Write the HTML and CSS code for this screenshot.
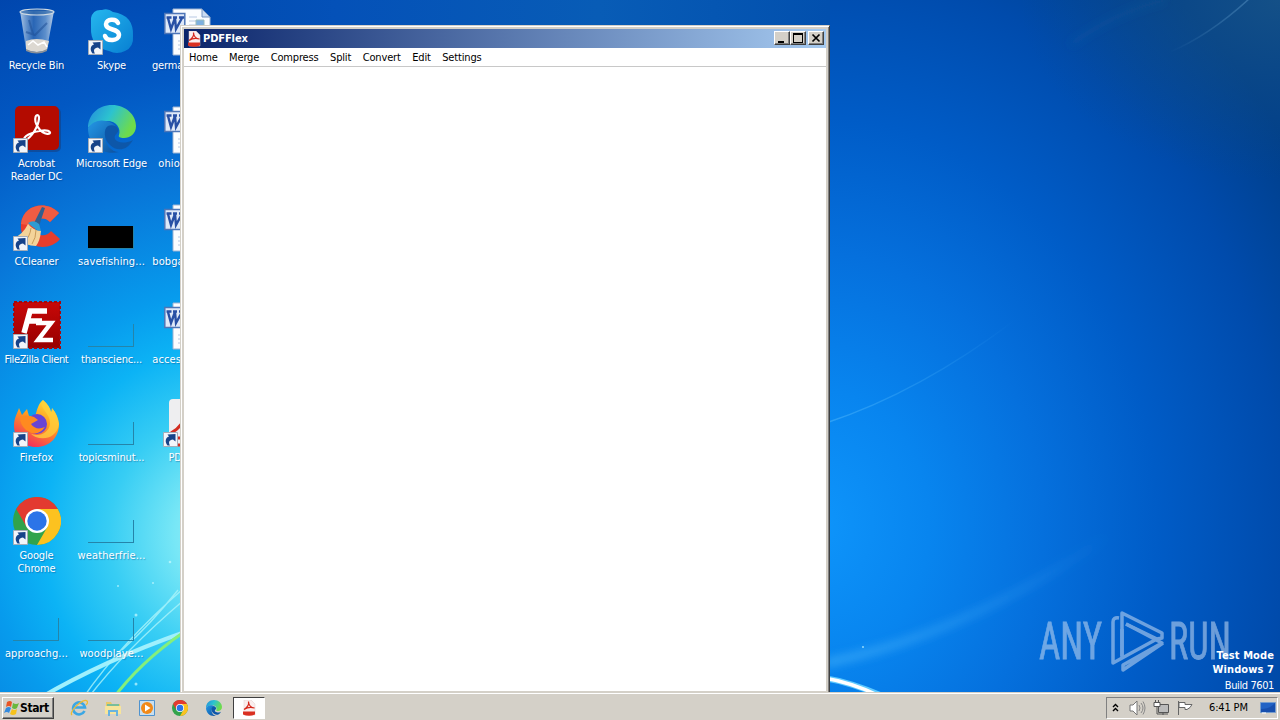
FILE: index.html
```html
<!DOCTYPE html>
<html lang="en">
<head>
    <meta charset="UTF-8">
    <meta name="viewport" content="width=device-width, initial-scale=1.0">
    <title>PDFFlex</title>
    <link rel="stylesheet" href="styles.css">
</head>
<body>
    <!-- shared icon shapes -->
    <svg class="defs" width="0" height="0">
        <defs>
            <linearGradient id="skypeBlue" x1="0" y1="0" x2="1" y2="1"><stop offset="0" stop-color="#25b7ee"/><stop offset="1" stop-color="#087fd2"/></linearGradient>
            <linearGradient id="edgeTop" x1="0" y1="0" x2="1" y2=".4"><stop offset="0" stop-color="#2389dc"/><stop offset=".5" stop-color="#2cc3cf"/><stop offset="1" stop-color="#6edb4c"/></linearGradient>
            <linearGradient id="edgeLow" x1="0" y1="0" x2="1" y2="1"><stop offset="0" stop-color="#2498e5"/><stop offset="1" stop-color="#0b4f9f"/></linearGradient>
            <linearGradient id="fox" x1=".8" y1="0" x2=".3" y2="1"><stop offset="0" stop-color="#ffe43b"/><stop offset=".45" stop-color="#ff9a22"/><stop offset="1" stop-color="#f2285d"/></linearGradient>
            <linearGradient id="glass" x1="0" y1="0" x2="1" y2="0"><stop offset="0" stop-color="#c9dcef" stop-opacity=".85"/><stop offset=".4" stop-color="#3f74b6" stop-opacity=".65"/><stop offset=".75" stop-color="#84abd5" stop-opacity=".7"/><stop offset="1" stop-color="#dbe6f2" stop-opacity=".85"/></linearGradient>
            <linearGradient id="zilla" x1="0" y1="0" x2="0" y2="1"><stop offset="0" stop-color="#c80808"/><stop offset="1" stop-color="#960000"/></linearGradient>
        </defs>
        <symbol id="arrow" viewBox="0 0 15 15">
            <path d="M.5.5h14v14H.5z" fill="#f2f5fa" stroke="#a5adb8"/>
            <path d="M4.500 13.500c-3-4-2-8 1.500-9L4.500 2.500 12.500 2v7.500L10 7.500c-4 .5-5 3-3 6z" fill="#174389"/>
        </symbol>
        <symbol id="acro" viewBox="0 0 32 32">
            <path d="M3 28c-4-3 8-9 18-10 9-.8 10 4 5 3.500C19 21 12 10 14 4c1-3 4-2 3.500 2C17 13 10 26 3 28z" fill="none" stroke="currentColor" stroke-width="2.200" stroke-linejoin="round"/>
        </symbol>
        <symbol id="edge" viewBox="0 0 48 48">
            <path d="M0 23C0 10 10 0 24 0s24 10 24 21c0 8-6 12-12 12-4 0-6-1-5-3 2-6-2-14-12-14C10 16 3 20 0 23z" fill="url(#edgeTop)"/>
            <path d="M0 23c4-6 11-9 18-7 7 1 11 6 12 11-5-7-13-3-13 5 0 7 6 15 14 15C14 51 0 40 0 23z" fill="url(#edgeLow)"/>
            <path d="M20 21c-5 3-4 14 2 19 6 6 16 7 23-5-8 4-16 3-18-1-2-5 5-6 3-10-1-3-6-5-10-3z" fill="#0d57a9"/>
        </symbol>
        <symbol id="chrome" viewBox="0 0 48 48">
            <circle cx="24" cy="24" r="24" fill="#31a34c"/>
            <path d="M24 12h20.800A24 24 0 0 1 24 48l10.400-18z" fill="#fcc220"/>
            <path d="M3.200 12A24 24 0 0 1 44.800 12H24L13.600 30z" fill="#e33a30"/>
            <circle cx="24" cy="24" r="12" fill="#fff"/><circle cx="24" cy="24" r="9.700" fill="#2b74e8"/>
        </symbol>
        <symbol id="word" viewBox="0 0 48 48">
            <path d="M9 1h29l8 8v38H9z" fill="#fbfdff" stroke="#9db4d3"/>
            <path d="M38 1v8h8z" fill="#cbdcf2" stroke="#7896c0"/>
            <path d="M14 33h26M14 37h26M14 41h26M25 9h8M25 13h8M25 17h8" stroke="#b7c8e2"/>
            <path d="M32 12h8v6h-8z" fill="#7eb0df" stroke="#9bb"/>
            <path d="M.8 5.500h20v20h-20z" fill="#dfe9f8" stroke="#4e76b7" stroke-width="1.500"/>
            <path d="M4 10l3 11 4-11 1 11 6-11M2.500 9.500h5M9 9.500h4M15 9.500h5" fill="none" stroke="#2850a5" stroke-width="2.400"/>
        </symbol>
        <symbol id="pdfIcon" viewBox="0 0 14 16">
            <path d="M2 0h7l4 4v11H2z" fill="#faeeee" stroke="#e0cccc" stroke-width=".5"/>
            <path d="M2 9.500C6 7 7 4 6.500 1.500 6.500 5 9 8 12.500 8 9 7 5 7.500 2 9.500z" stroke="#d5281c" stroke-width="1.200" fill="none"/>
            <path d="M1 11.500h12v3q-6 2.500-12 0z" fill="#da3021"/>
        </symbol>
    </svg>

    <svg class="wallpaper" viewBox="0 0 1280 720">
        <defs>
            <radialGradient id="leftGlow" gradientUnits="userSpaceOnUse" cx="235" cy="535" r="600">
                <stop offset="0" stop-color="#a8f3f6"/><stop offset=".1" stop-color="#78e7f6"/><stop offset=".21" stop-color="#37cdf4"/>
                <stop offset=".32" stop-color="#0cb3f5"/><stop offset=".41" stop-color="#079bed"/><stop offset=".6" stop-color="#0875d8"/>
                <stop offset=".77" stop-color="#0258c3"/><stop offset="1" stop-color="#0044ab"/>
            </radialGradient>
            <radialGradient id="rightGlow" gradientUnits="userSpaceOnUse" cx="0" cy="0" r="1" gradientTransform="translate(815 525) scale(570 680)">
                <stop offset="0" stop-color="#0e95fb"/><stop offset=".2" stop-color="#0885ef"/><stop offset=".4" stop-color="#0570dd"/>
                <stop offset=".6" stop-color="#005cc7"/><stop offset=".82" stop-color="#004bac"/><stop offset="1" stop-color="#003f8b"/>
            </radialGradient>
            <linearGradient id="topBand"><stop offset="0" stop-color="#004aaf"/><stop offset=".25" stop-color="#0451b8"/><stop offset=".65" stop-color="#085cb6"/><stop offset="1" stop-color="#0250ae"/></linearGradient>
            <radialGradient id="corner" cx="1" cy="0" r="1"><stop offset="0" stop-color="#1b5686" stop-opacity=".75"/><stop offset="1" stop-color="#104a82" stop-opacity="0"/></radialGradient>
            <linearGradient id="ray"><stop offset="0" stop-color="#4bb4fa" stop-opacity=".55"/><stop offset="1" stop-color="#4bb4fa" stop-opacity="0"/></linearGradient>
            <linearGradient id="topRay"><stop offset="0" stop-color="#5995c5" stop-opacity="0"/><stop offset="1" stop-color="#5995c5" stop-opacity=".5"/></linearGradient>
            <filter id="soft" x="-10%" y="-20%" width="120%" height="140%"><feGaussianBlur stdDeviation="4"/></filter>
            <filter id="slight"><feGaussianBlur stdDeviation=".7"/></filter>
        </defs>
        <rect width="500" height="720" fill="url(#leftGlow)"/>
        <rect x="500" width="780" height="720" fill="url(#rightGlow)"/>
        <rect x="170" width="660" height="40" fill="url(#topBand)"/>
        <rect x="1020" width="260" height="180" fill="url(#corner)"/>
        <path d="M826 423Q920 392 1015 320" stroke="url(#ray)" stroke-width="1.500" fill="none"/>
        <path d="M826 663Q965 635 1110 535" stroke="url(#ray)" stroke-width="9" fill="none" filter="url(#soft)"/>
        <path d="M1170 52Q1210 35 1250-2" stroke="url(#topRay)" stroke-width="1.500" fill="none"/>
        <path d="M1070 45Q1115 12 1165 0" stroke="#2d6eae" stroke-opacity=".15" stroke-width="6" fill="none" filter="url(#soft)"/>
        <path d="M824 678Q850 682 885 697" stroke="#5fcaff" stroke-width="6" fill="none" filter="url(#slight)"/>
        <path d="M824 678Q850 682 880 696" stroke="#fff" stroke-width="3.500" fill="none"/>
        <g fill="none" filter="url(#slight)">
            <path d="M40 698Q105 660 185 632" stroke="#9ff0fd" stroke-width="4"/>
            <path d="M83 698Q120 644 184 588M88 698Q125 650 184 600M122 650Q150 625 178 590" stroke="#aaf4fa" stroke-opacity=".8" stroke-width="1.400"/>
            <path d="M112 700Q140 662 184 632" stroke="#84ef7b" stroke-width="3"/>
        </g>
        <g fill="#c9faff" fill-opacity=".7"><circle cx="118" cy="586" r="1"/><circle cx="153" cy="583" r="1"/><circle cx="136" cy="615" r="1.500"/><circle cx="136" cy="684" r="1.500"/><circle cx="170" cy="562" r="1.300"/><circle cx="863" cy="647" r="1"/></g>
    </svg>

    <main class="desktop">
        <div class="item">
            <svg class="icon" viewBox="0 0 48 48">
                <path d="M7 3l6 38q11 5 21 0l7-38z" fill="url(#glass)"/>
                <path d="M13 33q10-4 23 0l-2 9q-10 4-21 0z" fill="#dcd8d1"/>
                <path d="M15 37l5-4 5 4 6-3 3 5" fill="none" stroke="#fff" stroke-width="1.500"/>
                <path d="M13 24l9 3 12-12M16 12l4 14" stroke="#1b4c91" stroke-opacity=".5" stroke-width="2" fill="none"/>
                <ellipse cx="24" cy="4" rx="17" ry="3" fill="#376da8" fill-opacity=".6" stroke="#cfdae3" stroke-width="1.200"/>
                <path d="M13 41q11 6 21 0v2q-10 5-21 0z" fill="#8a9098"/>
            </svg>
            <span class="label">Recycle Bin</span>
        </div>
        <div class="item">
            <svg class="icon" viewBox="0 0 48 48">
                <path d="M14 2Q5 1 3 10v9q-1 20 18 24 8 4 16 0 9-4 8-15Q46 7 25 4 20 0 14 2z" fill="url(#skypeBlue)"/>
                <path d="M30 15c-2-5-12-4-12 1 0 7 13 4 13 11 0 6-12 7-14 1" fill="none" stroke="#fff" stroke-width="4.500" stroke-linecap="round"/>
                <use href="#arrow" x="0" y="32" width="15" height="15"/>
            </svg>
            <span class="label">Skype</span>
        </div>
        <div class="item"><svg class="icon doc"><use href="#word"/></svg><span class="label">germanyjoin...</span></div>

        <div class="item">
            <svg class="icon" viewBox="0 0 48 48">
                <rect x="3" y="2" width="45" height="44" rx="5" fill="#173a76" opacity=".5"/>
                <rect x="2" y="0" width="44" height="44" rx="5" fill="#b30b00"/>
                <svg class="white" x="9" y="7" width="31" height="31"><use href="#acro"/></svg>
                <use href="#arrow" x="0" y="32" width="15" height="15"/>
            </svg>
            <span class="label">Acrobat<br>Reader DC</span>
        </div>
        <div class="item">
            <svg class="icon" viewBox="0 0 48 48"><use href="#edge" y="-1" width="48" height="48"/><use href="#arrow" x="0" y="32" width="15" height="15"/></svg>
            <span class="label">Microsoft Edge</span>
        </div>
        <div class="item"><svg class="icon doc"><use href="#word"/></svg><span class="label wide">ohioopen...</span></div>

        <div class="item">
            <svg class="icon" viewBox="0 0 48 48">
                <path d="M46 9C34-4 10 0 8 20c-2 23 27 30 39 15l-9-8c-6 8-16 4-16-4 0-9 9-12 15-5z" fill="#e83d2c"/>
                <path d="M46 9C34-4 10 0 8 20l14 2c1-8 9-10 15-4z" fill="#f05c42"/>
                <path d="M29 3l3 1-6 18-5-3z" fill="#315f8f"/>
                <path d="M15 19q6-4 11 1l2 7q-6-1-13-8z" fill="#2e9bd3"/>
                <path d="M15 20q6 7 13 7-1 10-5 15-10 0-22-8 9-4 14-14z" fill="#f4d49a"/>
                <path d="M18 24q-1 9-7 14M23 26q0 8-4 14" stroke="#c99b59" fill="none"/>
                <use href="#arrow" x="0" y="32" width="15" height="15"/>
            </svg>
            <span class="label">CCleaner</span>
        </div>
        <div class="item"><div class="icon"><div class="thumb black"></div></div><span class="label wide">savefishing...</span></div>
        <div class="item"><svg class="icon doc"><use href="#word"/></svg><span class="label wide">bobgallerys...</span></div>

        <div class="item">
            <svg class="icon" viewBox="0 0 48 48">
                <path d="M1 0h46v46H1z" fill="url(#zilla)" stroke="#a80509" stroke-width="2" stroke-dasharray="3 2"/>
                <path d="M11 31l6-22h17M14 19h15" stroke="#fff" stroke-width="5.500" fill="none"/>
                <path d="M23 21h15L25 38h15" stroke="#fff" stroke-width="4.500" fill="none"/>
                <use href="#arrow" x="0" y="32" width="15" height="15"/>
            </svg>
            <span class="label tight">FileZilla Client</span>
        </div>
        <div class="item"><div class="icon"><div class="thumb"></div></div><span class="label">thanscienc...</span></div>
        <div class="item"><svg class="icon doc"><use href="#word"/></svg><span class="label wide">accessories...</span></div>

        <div class="item">
            <svg class="icon" viewBox="0 0 48 48">
                <path d="M30 0q7 6 8 12 2-1 1-4 6 7 7 16c0 13-9 23-23 23C10 47 1 38 1 26 1 18 4 14 6 8l3 7 5-6 2 7 6 1c2-7 3-13 8-17z" fill="url(#fox)"/>
                <path d="M30 0c-6 7 8 13 7 24-1 9-12 14-20 9 8 9 27 7 29-9-1-6-3-11-7-16l-1 4Q36 5 30 0z" fill="#ffd23c" opacity=".75"/>
                <circle cx="24" cy="24" r="10" fill="#6944d5"/>
                <path d="M7 17q7-3 14 0l4 3-7 4q5 7 14 3-8 11-19 3-6-5-6-13z" fill="#ff8a20"/>
                <use href="#arrow" x="0" y="32" width="15" height="15"/>
            </svg>
            <span class="label wide">Firefox</span>
        </div>
        <div class="item"><div class="icon"><div class="thumb"></div></div><span class="label">topicsminut...</span></div>
        <div class="item">
            <svg class="icon" viewBox="0 0 48 48"><rect x="6" y="-1" width="34" height="47" rx="4" fill="#eeeef0"/><path d="M8 33q14-8 14-20 0 14 17 20M8 38h32v7H8z" fill="none" stroke="#d32c20" stroke-width="3"/><use href="#arrow" x="0" y="32" width="15" height="15"/></svg>
            <span class="label">PDFflex</span>
        </div>

        <div class="item">
            <svg class="icon" viewBox="0 0 48 48"><use href="#chrome" y="-1" width="48" height="48"/><use href="#arrow" x="0" y="32" width="15" height="15"/></svg>
            <span class="label">Google<br>Chrome</span>
        </div>
        <div class="item"><div class="icon"><div class="thumb"></div></div><span class="label wide">weatherfrie...</span></div>
        <div class="item"></div>
        <div class="item"><div class="icon"><div class="thumb"></div></div><span class="label wide">approachg...</span></div>
        <div class="item"><div class="icon"><div class="thumb"></div></div><span class="label wide">woodplaye...</span></div>
    </main>

    <svg class="watermark" viewBox="0 0 192 64">
        <text x="0" y="50" textLength="63" lengthAdjust="spacingAndGlyphs">ANY</text>
        <text x="130" y="50" textLength="62" lengthAdjust="spacingAndGlyphs">RUN</text>
        <g fill="none" stroke-width="3.500" stroke-linejoin="round">
            <path d="M80 9q-6-1-6 4v41l42-23"/>
            <path d="M83 49V4l40 20v5l-5 1L87 15"/>
            <path d="M83 20v27M87 15l36 19-39 22v5l40-27"/>
        </g>
    </svg>
    <div class="build"><b>Test Mode</b><b>Windows 7</b><span>Build 7601</span></div>

    <section class="window">
        <header class="titlebar">
            <svg width="14" height="16"><use href="#pdfIcon"/></svg>
            <span class="title">PDFFlex</span>
            <button class="control" aria-label="Minimize"><svg width="14" height="12"><path d="M3 9h6v2H3z"/></svg></button>
            <button class="control" aria-label="Maximize"><svg width="14" height="12"><path d="M2 1h10v10H2zM3 3v7h8V3z" fill-rule="evenodd"/></svg></button>
            <button class="control close" aria-label="Close"><svg width="14" height="12"><path d="M3.500 2.500l7 7m0-7l-7 7" stroke="#000" stroke-width="1.700"/></svg></button>
        </header>
        <nav class="menu">
            <span>Home</span><span>Merge</span><span>Compress</span><span>Split</span><span>Convert</span><span>Edit</span><span>Settings</span>
        </nav>
        <div class="page"></div>
    </section>

    <footer class="taskbar">
        <button class="start">
            <svg width="16" height="16" viewBox="0 0 16 16"><path d="M3 2q3-2 5 0L7 7q-2-2-5 0z" fill="#e95525"/><path d="M9 3q3 2 6 0l-2 5q-2 2-5 0z" fill="#69b83d"/><path d="M2 8q3-2 5 0l-2 5q-2-2-5 0z" fill="#348ade"/><path d="M8 9q2 2 5 0l-1 5q-3 2-6 0z" fill="#f6c21c"/></svg>
            <span>Start</span>
        </button>
        <div class="tasks">
            <svg width="18" height="18" viewBox="0 0 18 18"><path d="M14.500 12A6 6 0 1 1 15 8.500H5" fill="none" stroke="#3ba7e4" stroke-width="2.600"/><path d="M2 16C-2 13 14-2 17 2c1 1 0 3-1 4" fill="none" stroke="#edbb32" stroke-width="1.300"/></svg>
            <svg width="18" height="18" viewBox="0 0 18 18"><path d="M2 3h5l1 2h8v9H2z" fill="#e8ca67"/><path d="M3 5h12v3H3z" fill="#79bd9b"/><path d="M1 7h16v8H1z" fill="#f7e49b"/><path d="M5 17v-5h8v5" fill="none" stroke="#68b3df" stroke-width="2"/></svg>
            <svg width="18" height="18" viewBox="0 0 18 18"><path d="M1.500 1.500h15v15h-15z" fill="#c9dfef" stroke="#4f93cf"/><circle cx="9" cy="9" r="6" fill="#f18918"/><path d="M7 5.500v7L12.500 9z" fill="#fff"/></svg>
            <svg width="16" height="16"><use href="#chrome"/></svg>
            <svg width="16" height="16"><use href="#edge"/></svg>
        </div>
        <div class="active-task"><svg width="14" height="16"><use href="#pdfIcon"/></svg></div>
        <div class="tray">
            <svg class="chevrons" width="7" height="10"><path d="M1 4l2.500-2.500L6 4M1 8l2.500-2.500L6 8" fill="none" stroke="#000" stroke-width="1.400"/></svg>
            <svg class="speaker" width="17" height="16" viewBox="0 0 17 16"><path d="M1 5h3l4-4v14l-4-4H1z" fill="#fff" stroke="#777"/><path d="M10 5q2 3 0 6M12 3q4 5 0 10M14 1.500q4 6.500 0 13" fill="none" stroke="#888"/></svg>
            <svg class="network" width="17" height="16" viewBox="0 0 17 16"><path d="M5.500 4.500h10v8h-10z" fill="#bbb" stroke="#555"/><path d="M1 2.500h6v4H1zM2.500 0v3M5.500 0v3" fill="#fff" stroke="#555"/><path d="M4 7v7h11M10 13v2" fill="none" stroke="#555"/></svg>
            <svg class="flag" width="17" height="16" viewBox="0 0 17 16"><path d="M1.500 1v14M2 2.500h6v2h7l-2 3-3 2H8v-2H2z" fill="#fff" stroke="#666"/></svg>
            <span class="clock">6:41 PM</span>
            <svg class="show-desktop" width="16" height="14" viewBox="0 0 16 14"><path d="M.5 1.500h15v10H.5z" fill="#2263c5" stroke="#769dcd"/><path d="M1 8q9 0 14-6v9H1z" fill="#174fae"/><path d="M2 12h4" stroke="#fff"/></svg>
        </div>
    </footer>
</body>
</html>
```
FILE: styles.css
```css
* {
    box-sizing: border-box;
}

body {
    display: flex;
    flex-direction: column;
    width: 1280px;
    height: 720px;
    margin: 0;
    overflow: hidden;
    position: relative;
    font-family: 'DejaVu Sans Condensed', 'DejaVu Sans', sans-serif;
    font-stretch: condensed;
    font-size: 11px;
    letter-spacing: -0.15px;
    background-color: #0062d0;
}

svg {
    display: block;
    flex-shrink: 0;
}

.defs {
    position: absolute;
}

.wallpaper {
    position: absolute;
    width: 1280px;
    height: 720px;
    z-index: -1;
}

.desktop {
    display: grid;
    grid-template-columns: repeat(3, 75px);
    grid-template-rows: repeat(7, 98px);
    flex: 1;
    min-height: 0;
    margin-left: -1px;
    padding-top: 8px;
}

.item {
    display: flex;
    flex-direction: column;
    align-items: center;
    min-width: 0;
    color: #fff;
}

.icon {
    width: 48px;
    height: 48px;
    flex-shrink: 0;
    overflow: visible;
}

.doc {
    margin-left: 2px;
}

.label {
    margin-top: 3px;
    line-height: 13px;
    text-align: center;
    white-space: nowrap;
    text-shadow: 1px 1px 1px rgba(0, 40, 100, 0.35);
}

.label.wide {
    letter-spacing: 0.1px;
}

.label.tight {
    letter-spacing: -0.35px;
}

.thumb {
    width: 46px;
    height: 23px;
    margin-top: 22px;
    border-right: 1px solid #2584a9;
    border-bottom: 1px solid #2584a9;
}

.thumb.black {
    background-color: #000;
}

.white {
    color: #fff;
}

.watermark {
    position: absolute;
    left: 1039px;
    top: 609px;
    width: 192px;
    height: 64px;
    fill: #b6d0ef;
    stroke: #b6d0ef;
    opacity: 0.6;
}

.watermark text {
    font-family: Roboto, sans-serif;
    font-size: 52px;
    letter-spacing: 0;
    stroke-width: 0.8px;
}

.build {
    display: flex;
    flex-direction: column;
    align-items: flex-end;
    position: absolute;
    right: 6px;
    top: 649px;
    color: #fff;
    line-height: 14px;
}

.build b {
    letter-spacing: 0.1px;
}

.build span {
    margin-top: 2px;
    letter-spacing: -0.4px;
}

.window {
    display: flex;
    flex-direction: column;
    position: absolute;
    left: 180px;
    top: 25px;
    width: 650px;
    height: 669px;
    padding: 3px 3px 2px;
    background-color: #d4d0c8;
    border: 1px solid #d4d0c8;
    border-right-color: #404040;
    box-shadow: inset 1px 1px #fff, inset -1px 0 #808080;
}

.titlebar {
    display: flex;
    align-items: center;
    height: 19px;
    padding: 0 2px 0 3px;
    background: linear-gradient(90deg, #0a246a, #a6caf0);
    color: #fff;
    font-weight: bold;
}

.titlebar .control {
    margin-bottom: 1px;
}

.title {
    flex: 1;
    margin-left: 2px;
    letter-spacing: -0.1px;
}

.control {
    width: 16px;
    height: 14px;
    padding: 0;
    background-color: #d4d0c8;
    border: 1px solid;
    border-color: #fff #404040 #404040 #fff;
    box-shadow: inset -1px -1px #808080;
}

.close {
    margin-left: 2px;
}

.menu {
    display: flex;
    gap: 11.5px;
    height: 19px;
    padding-left: 5px;
    line-height: 19px;
    letter-spacing: -0.16px;
    background-color: #fff;
    border-bottom: 1px solid #c8c8c8;
}

.page {
    flex: 1;
    background-color: #fff;
}

.taskbar {
    display: flex;
    align-items: center;
    position: relative;
    height: 28px;
    padding: 2px 2px 0;
    background-color: #d4d0c8;
    border-top: 1px solid #d4d0c8;
    box-shadow: inset 0 1px #fff;
}

.start {
    display: flex;
    align-items: center;
    width: 52px;
    height: 22px;
    padding: 0 2px 0 1px;
    background-color: #d4d0c8;
    border: 1px solid;
    border-color: #fff #404040 #404040 #fff;
    box-shadow: inset -1px -1px #808080;
    font: bold 12px 'DejaVu Sans Condensed', 'DejaVu Sans', sans-serif;
    letter-spacing: -0.4px;
}

.tasks {
    display: flex;
    align-items: center;
    gap: 16px;
    margin-left: 16px;
}

.tasks svg:last-child {
    margin-left: 2px;
}

.active-task {
    display: flex;
    align-items: center;
    justify-content: center;
    width: 32px;
    height: 22px;
    margin-left: 11px;
    background-color: #fff;
    border: 1px solid;
    border-color: #404040 #fff #fff #404040;
}

.tray {
    display: flex;
    align-items: center;
    width: 172px;
    height: 22px;
    margin-left: auto;
    padding-left: 5px;
    border: 1px solid;
    border-color: #808080 #fff #fff #808080;
}

.speaker {
    margin-left: 10px;
}

.network,
.flag {
    margin-left: 7px;
}

.clock {
    width: 40px;
    margin-left: 15px;
    white-space: nowrap;
}

.show-desktop {
    margin-left: 11px;
}
```
